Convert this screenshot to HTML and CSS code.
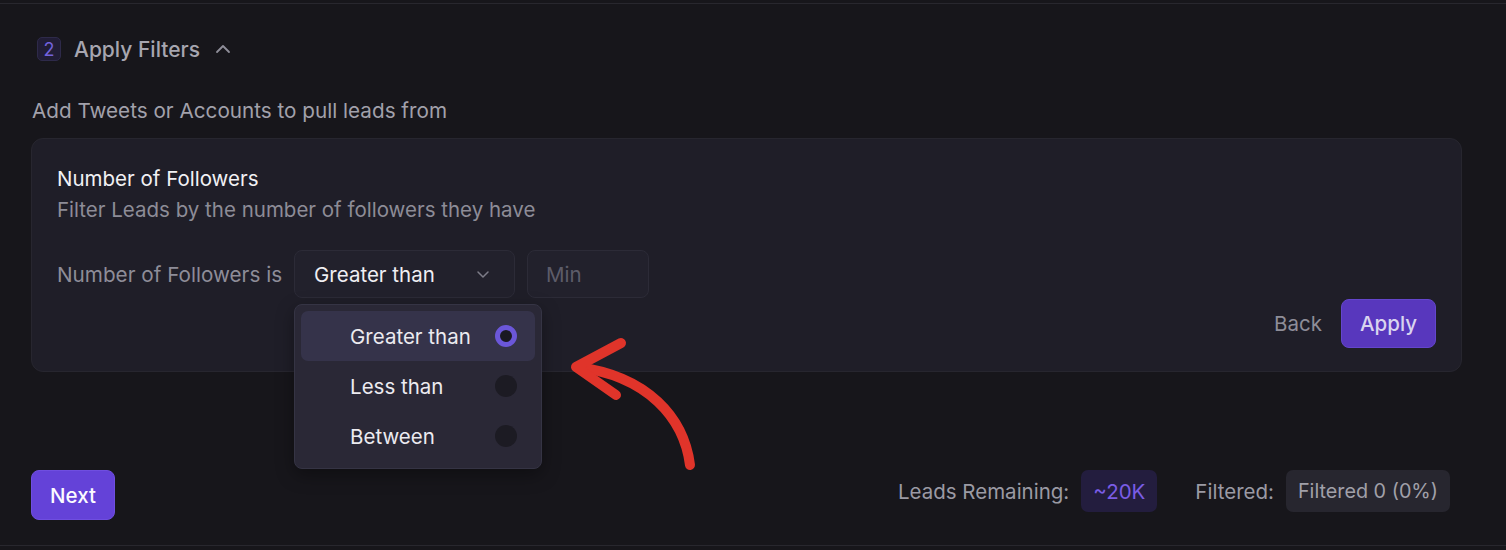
FILE: index.html
```html
<!DOCTYPE html>
<html>
<head>
<meta charset="utf-8">
<link rel="stylesheet" href="styles.css">
</head>
<body>
<section class="step">
  <div class="step-head">
    <span class="step-num">2</span>
    <span class="step-title">Apply Filters</span>
    <svg class="chev-up" width="16" height="16" viewBox="0 0 16 16"><path d="M2 11 L8 5 L14 11" fill="none" stroke="#8f8e99" stroke-width="1.8" stroke-linecap="round" stroke-linejoin="round"/></svg>
  </div>
  <p class="intro">Add Tweets or Accounts to pull leads from</p>
  <div class="card">
    <div class="card-title">Number of Followers</div>
    <div class="card-sub">Filter Leads by the number of followers they have</div>
    <div class="cond-row">
      <span class="cond-label">Number of Followers is</span>
      <div class="select-wrap">
        <div class="select">
          <span>Greater than</span>
          <svg width="14" height="14" viewBox="0 0 14 14"><path d="M2 5 L7 10 L12 5" fill="none" stroke="#7d7c88" stroke-width="1.5" stroke-linecap="round" stroke-linejoin="round"/></svg>
        </div>
        <div class="menu">
          <div class="opt active"><span>Greater than</span><span class="radio on"></span></div>
          <div class="opt"><span>Less than</span><span class="radio"></span></div>
          <div class="opt"><span>Between</span><span class="radio"></span></div>
        </div>
      </div>
      <div class="input">Min</div>
    </div>
    <div class="actions">
      <span class="back">Back</span>
      <span class="btn apply">Apply</span>
    </div>
  </div>
  <div class="footer">
    <span class="btn next">Next</span>
    <div class="stats">
      <span class="stat-label">Leads Remaining:</span>
      <span class="pill pill-purple">~20K</span>
      <span class="stat-label filt">Filtered:</span>
      <span class="pill pill-gray">Filtered 0 (0%)</span>
    </div>
  </div>
  <svg class="arrow" width="1506" height="550" viewBox="0 0 1506 550">
    <g fill="none" stroke="#e0342a" stroke-width="10" stroke-linecap="round" stroke-linejoin="round">
      <path d="M690 465 C 684 418, 648 376, 577 367"/>
      <path d="M621 343 L576 367 L616 395"/>
    </g>
  </svg>
</section>
</body>
</html>
```
FILE: styles.css
```css
* { box-sizing: border-box; }
html, body { margin: 0; padding: 0; }
body {
  background: #17161b;
  font-family: Inter, "Noto Sans", sans-serif;
  width: 1506px;
  height: 550px;
  overflow: hidden;
  padding-top: 3px;
}
.step {
  position: relative;
  border-top: 1px solid #28272e;
  border-bottom: 1px solid #28272e;
  height: 543px;
  padding: 0 44px 0 31px;
}
.step-head {
  display: flex;
  align-items: center;
  padding: 33px 0 0 6px;
  height: 57px;
}
.step-num {
  width: 24px;
  height: 24px;
  border-radius: 5px;
  background: #211d36;
  border: 1px solid #2e2a4a;
  color: #7362dc;
  font-size: 18px;
  display: flex;
  align-items: center;
  justify-content: center;
}
.step-title {
  margin-left: 13px;
  color: #a7a6b0;
  font-size: 21px;
  font-weight: 500;
}
.chev-up { margin-left: 15px; }
.intro {
  margin: 37px 0 0 1px;
  color: #a2a1ab;
  font-size: 20.7px;
  line-height: 26px;
}
.card {
  margin-top: 14px;
  background: #1f1e28;
  border: 1px solid #27262f;
  border-radius: 12px;
  padding: 27px 25px 24px 25px;
  height: 234px;
}
.card-title {
  color: #f1f1f4;
  font-size: 20.5px;
  line-height: 26px;
}
.card-sub {
  margin-top: 5px;
  color: #8d8c97;
  font-size: 20.5px;
  line-height: 26px;
}
.cond-row {
  display: flex;
  align-items: center;
  margin-top: 27px;
  gap: 12px;
}
.cond-label {
  color: #8e8d98;
  font-size: 20.7px;
}
.select-wrap { position: relative; }
.select {
  width: 221px;
  height: 48px;
  border: 1px solid #2c2b37;
  background: #22212c;
  border-radius: 8px;
  display: flex;
  align-items: center;
  justify-content: space-between;
  padding: 0 24px 0 19px;
  color: #f0eff3;
  font-size: 20.5px;
}
.input {
  width: 122px;
  height: 48px;
  border: 1px solid #2c2b37;
  background: #22212c;
  border-radius: 8px;
  display: flex;
  align-items: center;
  padding-left: 18px;
  color: #5d5c69;
  font-size: 20.5px;
}
.menu {
  position: absolute;
  z-index: 2;
  top: 54px;
  left: 0;
  width: 248px;
  height: 165px;
  background: #2a2836;
  border: 1px solid #353444;
  border-radius: 8px;
  padding: 6px;
  box-shadow: 0 6px 18px rgba(0,0,0,0.35);
}
.opt {
  height: 50px;
  border-radius: 7px;
  display: flex;
  align-items: center;
  justify-content: space-between;
  padding: 0 18px 0 49px;
  color: #ecebf0;
  font-size: 20.5px;
}
.opt.active { background: #35334a; }
.radio {
  width: 22px;
  height: 22px;
  border-radius: 50%;
  background: #1c1b23;
}
.radio.on {
  border: 5px solid #6b57d9;
  background: #1a1922;
}
.actions {
  display: flex;
  justify-content: flex-end;
  align-items: center;
  gap: 19px;
  margin-top: 1px;
}
.back {
  color: #8e8d98;
  font-size: 20.5px;
}
.btn {
  display: inline-flex;
  align-items: center;
  justify-content: center;
  border-radius: 8px;
  font-size: 20.5px;
  font-weight: 500;
}
.apply {
  width: 95px;
  height: 49px;
  background: #5837bd;
  color: #d9d4ef;
  border: 1px solid #6446cc;
}
.footer {
  display: flex;
  justify-content: space-between;
  align-items: flex-start;
  margin-top: 98px;
  padding-right: 12px;
}
.next {
  width: 84px;
  height: 50px;
  background: #6442d8;
  color: #fbfaff;
  border: 1px solid #6f4ee0;
}
.stats {
  display: flex;
  align-items: center;
  height: 42px;
}
.stat-label {
  color: #9b9aa4;
  font-size: 20.5px;
}
.stat-label.filt { margin-left: 38px; }
.pill {
  height: 42px;
  border-radius: 7px;
  display: inline-flex;
  align-items: center;
  padding: 0 12px;
  font-size: 20.5px;
  margin-left: 12px;
}
.pill-purple {
  background: #231d3e;
  color: #7a5ce5;
}
.pill-gray {
  background: #27262f;
  color: #a1a0a9;
  font-size: 19.8px;
}
.arrow {
  position: absolute;
  left: 0;
  top: -4px;
  pointer-events: none;
  z-index: 3;
}
```
